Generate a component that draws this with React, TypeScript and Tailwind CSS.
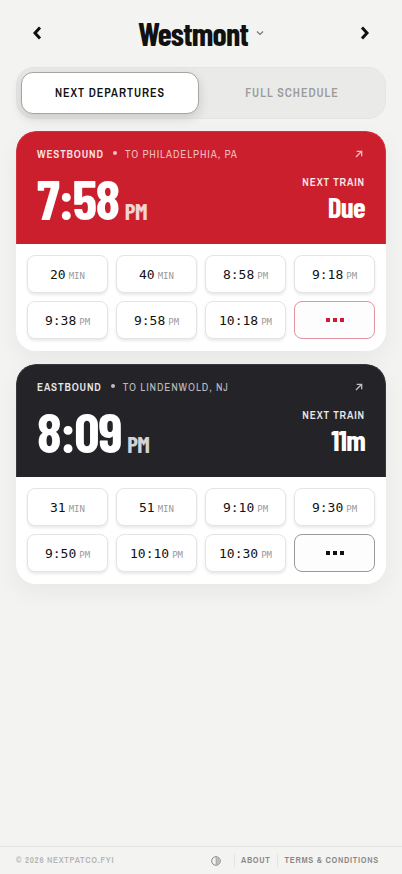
import { useState } from 'react'
import clsx from 'clsx'

interface Departure {
  value: string
  unit: string
}

interface DirectionCardProps {
  direction: string
  destination: string
  time: string
  next: string
  tone: 'red' | 'dark'
  departures: Departure[]
}

const westbound: Departure[] = [
  { value: '20', unit: 'MIN' },
  { value: '40', unit: 'MIN' },
  { value: '8:58', unit: 'PM' },
  { value: '9:18', unit: 'PM' },
  { value: '9:38', unit: 'PM' },
  { value: '9:58', unit: 'PM' },
  { value: '10:18', unit: 'PM' },
]

const eastbound: Departure[] = [
  { value: '31', unit: 'MIN' },
  { value: '51', unit: 'MIN' },
  { value: '9:10', unit: 'PM' },
  { value: '9:30', unit: 'PM' },
  { value: '9:50', unit: 'PM' },
  { value: '10:10', unit: 'PM' },
  { value: '10:30', unit: 'PM' },
]

const display = "font-['Barlow_Condensed','Roboto_Condensed','Roboto',sans-serif] font-bold"

function DirectionCard({ direction, destination, time, next, tone, departures }: DirectionCardProps) {
  const red = tone === 'red'

  return (
    <section className="overflow-hidden rounded-[20px] bg-white shadow-[0_8px_24px_rgba(0,0,0,0.05)]">
      <a
        href="#line"
        className={clsx(
          'block h-[113px] rounded-t-[20px] border px-5 pt-[15px] text-white',
          red ? 'border-[#d3323f] border-b-[#cc1f2d] bg-[#cc1f2d]' : 'border-[#38373b] border-b-[#242328] bg-[#242328]'
        )}
      >
        <div className="flex h-[14px] items-center text-[11px] leading-[14px] tracking-[0.08em]">
          <span className="font-semibold text-white/90">{direction}</span>
          <span className="mr-2 mb-[2px] ml-[9px] size-1 rounded-full bg-white/70" />
          <span className="text-white/70">{destination}</span>
          <svg viewBox="0 0 24 24" className="mr-[2px] ml-auto size-2 text-white/70" fill="none" stroke="currentColor" strokeWidth="4">
            <path d="M3 21 20 4M5 4h15v15" />
          </svg>
        </div>
        <div className="mt-[5px] flex items-start justify-between">
          <div className={clsx('flex items-baseline gap-[6px]', display)}>
            <span className="text-[56px] leading-16 tracking-tight">{time}</span>
            <span className="text-[23px] leading-6 tracking-tight text-white/80">PM</span>
          </div>
          <div className="pt-[9px] text-right">
            <div className="text-[11px] leading-[14px] font-semibold tracking-[0.08em] text-white/90">NEXT TRAIN</div>
            <div className={clsx('text-[29px] leading-9 tracking-tight', display)}>{next}</div>
          </div>
        </div>
      </a>
      <div className="grid grid-cols-4 gap-2 px-[11px] pt-[11px] pb-3">
        {departures.map((d) => (
          <button
            key={d.value}
            className="flex h-[38px] items-baseline justify-center gap-[3px] rounded-lg border border-[#e4e4e4] bg-white pt-[9px] font-['DejaVu_Sans_Mono',monospace] text-[13px] leading-5 text-[#111] shadow-[0_2px_3px_rgba(0,0,0,0.09)]"
          >
            {d.value}
            <span className="text-[9px] text-[#999]">{d.unit}</span>
          </button>
        ))}
        <button
          aria-label="More departures"
          className={clsx(
            'flex h-[38px] items-center justify-center gap-[3px] rounded-lg border bg-[#fdfdfd]',
            red ? 'border-[#e3939a] text-[#cc1f2d]' : 'border-[#99999b] text-[#111]'
          )}
        >
          <span className="size-1 bg-current" />
          <span className="size-1 bg-current" />
          <span className="size-1 bg-current" />
        </button>
      </div>
    </section>
  )
}

export default function App() {
  const [tab, setTab] = useState<'next' | 'full'>('next')
  const tabClass = (active: boolean) =>
    clsx(
      'h-[42px] rounded-xl border text-[12px] font-semibold tracking-[0.08em]',
      active
        ? 'border-[#a5a5a3] bg-white text-[#111] shadow-[0_4px_12px_rgba(0,0,0,0.14)]'
        : 'border-transparent text-[#9c9c9a]'
    )

  return (
    <div className="flex min-h-screen flex-col bg-[#f3f3f1] font-['Archivo_Narrow','Archivo','Roboto',sans-serif] text-[#111]">
      <header className="flex h-[67px] items-center justify-between px-[26px] pb-[2px]">
        <button aria-label="Previous station" className="flex size-[22px] items-center justify-center">
          <svg viewBox="0 0 12 16" className="h-4 w-3" fill="none" stroke="currentColor" strokeWidth="3">
            <path d="M9 2.500 4 8l5 5.500" />
          </svg>
        </button>
        <button className="flex items-center gap-2">
          <span className={clsx('text-[32px] leading-9 tracking-tight', display)}>Westmont</span>
          <svg viewBox="0 0 8 6" className="h-[6px] w-2 text-[#777]" fill="none" stroke="currentColor" strokeWidth="1.200">
            <path d="m1 1.500 3 3 3-3" />
          </svg>
        </button>
        <button aria-label="Next station" className="flex size-[22px] items-center justify-center">
          <svg viewBox="0 0 12 16" className="h-4 w-3" fill="none" stroke="currentColor" strokeWidth="3">
            <path d="m3 2.500 5 5.500-5 5.500" />
          </svg>
        </button>
      </header>

      <main className="flex flex-1 flex-col px-4">
        <div className="mb-3 grid grid-cols-2 gap-1 rounded-[18px] border border-[#e5e5e3] bg-[#eaeae8] p-1">
          <button className={tabClass(tab === 'next')} onClick={() => setTab('next')}>
            NEXT DEPARTURES
          </button>
          <button className={tabClass(tab === 'full')} onClick={() => setTab('full')}>
            FULL SCHEDULE
          </button>
        </div>
        <div className="flex flex-col gap-[13px]">
          <DirectionCard direction="WESTBOUND" destination="TO PHILADELPHIA, PA" time="7:58" next="Due" tone="red" departures={westbound} />
          <DirectionCard direction="EASTBOUND" destination="TO LINDENWOLD, NJ" time="8:09" next="11m" tone="dark" departures={eastbound} />
        </div>
      </main>

      <footer className="flex h-7 items-center border-t border-[#e3e3e1] px-4 text-[9px] font-semibold tracking-[0.08em] text-[#868684]">
        <span className="text-[#b5b5b3]">© 2026 NEXTPATCO.FYI</span>
        <button aria-label="Toggle theme" className="mr-[13px] ml-auto">
          <svg viewBox="0 0 10 10" className="size-[10px]">
            <circle cx="5" cy="5" r="4.300" fill="none" stroke="currentColor" />
            <path d="M5 1a4 4 0 0 1 0 8z" fill="#bdbdbb" />
            <path d="M5 1v8" stroke="currentColor" strokeWidth="0.500" />
          </svg>
        </button>
        <a href="#about" className="border-l border-[#e3e3e1] px-[6px]">ABOUT</a>
        <a href="#terms" className="border-l border-[#e3e3e1] px-[7px]">TERMS &amp; CONDITIONS</a>
      </footer>
    </div>
  )
}
